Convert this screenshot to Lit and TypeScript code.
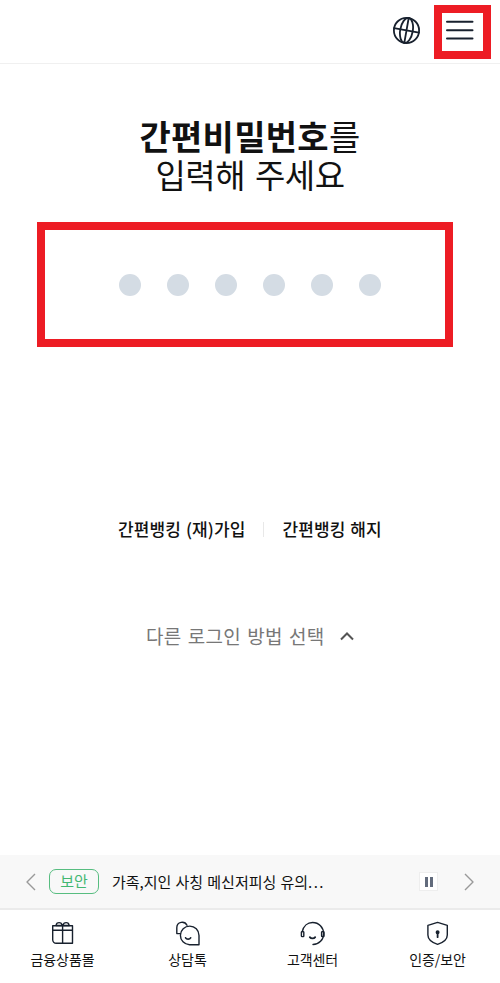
import { LitElement, html, css, svg } from "lit";
import { customElement } from "lit/decorators.js";

const gift = svg`<path d="M2.700 4.700h19.800v17.600H6.200a3.500 3.500 0 0 1-3.500-3.500zM2.700 9.200h19.800M12.600 4.700v17.600"/><path d="M12.300 4.500H6c.5-3.800 5.500-3.800 6.300 0zM12.900 4.500c.8-3.800 5.800-3.800 6.300 0z"/>`;
const talk = svg`<path d="M5.200 12.600H1.800V6.800c0-6.500 8-7.100 10.200-2.500"/><path d="M24 23.700h-9.500a9.300 9.300 0 1 1 9.500-9.300z"/><path d="M10.600 16.800c1 1.800 4 1.800 5 0" stroke-width="1.700"/>`;
const headset = svg`<path d="M2.300 10.500C3.500 5 7.500 1.500 12.600 1.500c6.300 0 11 5 11 11.200 0 6-4.600 10.800-10.600 10.800"/><rect x="1.400" y="10.600" width="2.400" height="5" rx=".7"/><rect x="21.600" y="10.600" width="2.400" height="5" rx=".7"/><path d="M9.800 16.100c1.200 1.600 4.200 1.600 5.400 0" stroke-width="1.800"/>`;
const shield = svg`<path d="M12.600 1.400 22.300 4.300V14c0 4.500-4 7.500-9.700 9.400C6.900 21.500 2.900 18.500 2.900 14V4.300z"/><circle cx="12.600" cy="11.300" r="1.300" fill="#18212e"/><path d="M12.600 12v4.200" stroke-width="1.800"/>`;

const tabs = [
  { label: "금융상품몰", icon: gift },
  { label: "상담톡", icon: talk },
  { label: "고객센터", icon: headset },
  { label: "인증/보안", icon: shield },
];

@customElement("app-root")
export class AppRoot extends LitElement {
  static styles = css`
    :host {
      display: flex;
      flex-direction: column;
      box-sizing: border-box;
      height: 983px;
      width: 500px;
      background: #fff;
      color: #111;
      font-family: "Noto Sans CJK KR", sans-serif;
      white-space: nowrap;
      overflow: hidden;
    }
    * { box-sizing: border-box; }
    svg { display: block; fill: none; stroke: #18212e; stroke-linecap: round; stroke-linejoin: round; }
    header {
      height: 64px;
      flex: none;
      display: flex;
      justify-content: flex-end;
      align-items: flex-start;
      gap: 13px;
      padding: 5px 9px 0 0;
      border-bottom: 1px solid #f0f0f0;
    }
    .globe { margin-top: 11px; stroke-width: 1.8; }
    .menu { width: 57px; height: 54px; border: 8px solid #ed1c24; }
    .menu svg { stroke-width: 2; }
    h1 {
      margin: 52px 0 0;
      text-align: center;
      font-size: 34px;
      line-height: 39px;
      font-weight: 400;
      height: 78px;
    }
    h1 span { display: block; }
    .first { letter-spacing: 0.3px; }
    .second { font-size: 33px; letter-spacing: -0.5px; word-spacing: 3px; }
    .pin {
      margin: 28px 0 0 37px;
      width: 416px;
      height: 125px;
      flex: none;
      border: 8px solid #ed1c24;
      display: flex;
      align-items: center;
      gap: 26px;
      padding-left: 74px;
    }
    .pin i { width: 22px; height: 22px; border-radius: 50%; background: #d4dce4; }
    .links {
      margin: 170px 0 0 118px;
      height: 24px;
      line-height: 24px;
      display: flex;
      align-items: center;
      font-size: 17px;
      font-weight: 500;
      word-spacing: 1px;
      letter-spacing: 0.1px;
    }
    .rule { width: 1px; height: 15px; background: #e8e8e8; margin: 0 18px; }
    .other {
      margin: 80px 0 0 146px;
      height: 30px;
      display: flex;
      align-items: center;
      gap: 15px;
      font-size: 19px;
      line-height: 30px;
      letter-spacing: 0.3px;
      word-spacing: 1.600px;
      color: #777;
    }
    .other svg { stroke: #555; stroke-width: 2; stroke-linecap: butt; stroke-linejoin: miter; }
    .notice {
      margin-top: auto;
      height: 55px;
      flex: none;
      background: #f8f8f8;
      border-bottom: 2px solid #ebebeb;
      display: flex;
      align-items: center;
      padding: 0 26px;
      font-size: 15px;
    }
    .notice svg { stroke: #999; stroke-width: 1.4; stroke-linecap: butt; }
    .tag {
      margin-left: 13px;
      width: 50px;
      height: 25px;
      line-height: 22px;
      border: 1px solid #57bd80;
      border-radius: 7px;
      color: #43b772;
      text-align: center;
    }
    .message { margin-left: 13px; flex: 1; word-spacing: 0.8px; }
    .dots { letter-spacing: 1.4px; }
    .pause {
      width: 19px;
      height: 19px;
      border: 1px solid #eee;
      background: #fff;
      display: flex;
      justify-content: center;
      align-items: center;
      gap: 2px;
      margin-right: 26px;
    }
    .pause i { width: 3px; height: 10px; background: #626b7c; }
    nav { height: 73px; flex: none; display: grid; grid-template-columns: repeat(4, 125px); }
    .tab { display: flex; flex-direction: column; align-items: center; padding-top: 11px; font-size: 14px; line-height: 20px; letter-spacing: -0.1px; }
    .tab svg { stroke-width: 1.4; margin-bottom: 3px; }
  `;

  render() {
    return html`
      <header>
        <svg class="globe" width="28" height="28" viewBox="0 0 28 28">
          <circle cx="13.500" cy="14.400" r="12.600" />
          <g transform="rotate(10 13.500 14.400)">
            <ellipse cx="13.500" cy="14.400" rx="6.300" ry="12.600" />
            <path d="M13.500 1.800v25.200M.9 14.400h25.200" />
          </g>
        </svg>
        <div class="menu">
          <svg width="41" height="38" viewBox="0 0 41 38"><path d="M5 8.700h25.500M5 17.200h25.500M5 25.600h25.500" /></svg>
        </div>
      </header>
      <h1><span class="first"><b>간편비밀번호</b>를</span><span class="second">입력해 주세요</span></h1>
      <div class="pin">${Array.from({ length: 6 }, () => html`<i></i>`)}</div>
      <div class="links"><span>간편뱅킹 (재)가입</span><span class="rule"></span><span>간편뱅킹 해지</span></div>
      <div class="other">
        <span>다른 로그인 방법 선택</span>
        <svg width="14" height="10" viewBox="0 0 14 10"><path d="M1 8.500 7 2.500l6 6" /></svg>
      </div>
      <div class="notice">
        <svg width="10" height="18" viewBox="0 0 10 18"><path d="M9 1 1 9l8 8" /></svg>
        <span class="tag">보안</span>
        <span class="message">가족,지인 사칭 메신저피싱 유의<span class="dots">...</span></span>
        <span class="pause"><i></i><i></i></span>
        <svg width="10" height="18" viewBox="0 0 10 18"><path d="m1 1 8 8-8 8" /></svg>
      </div>
      <nav>
        ${tabs.map((t) => html`<div class="tab">
          <svg width="25" height="25" viewBox="0 0 25 25">${t.icon}</svg><span>${t.label}</span>
        </div>`)}
      </nav>
    `;
  }
}
